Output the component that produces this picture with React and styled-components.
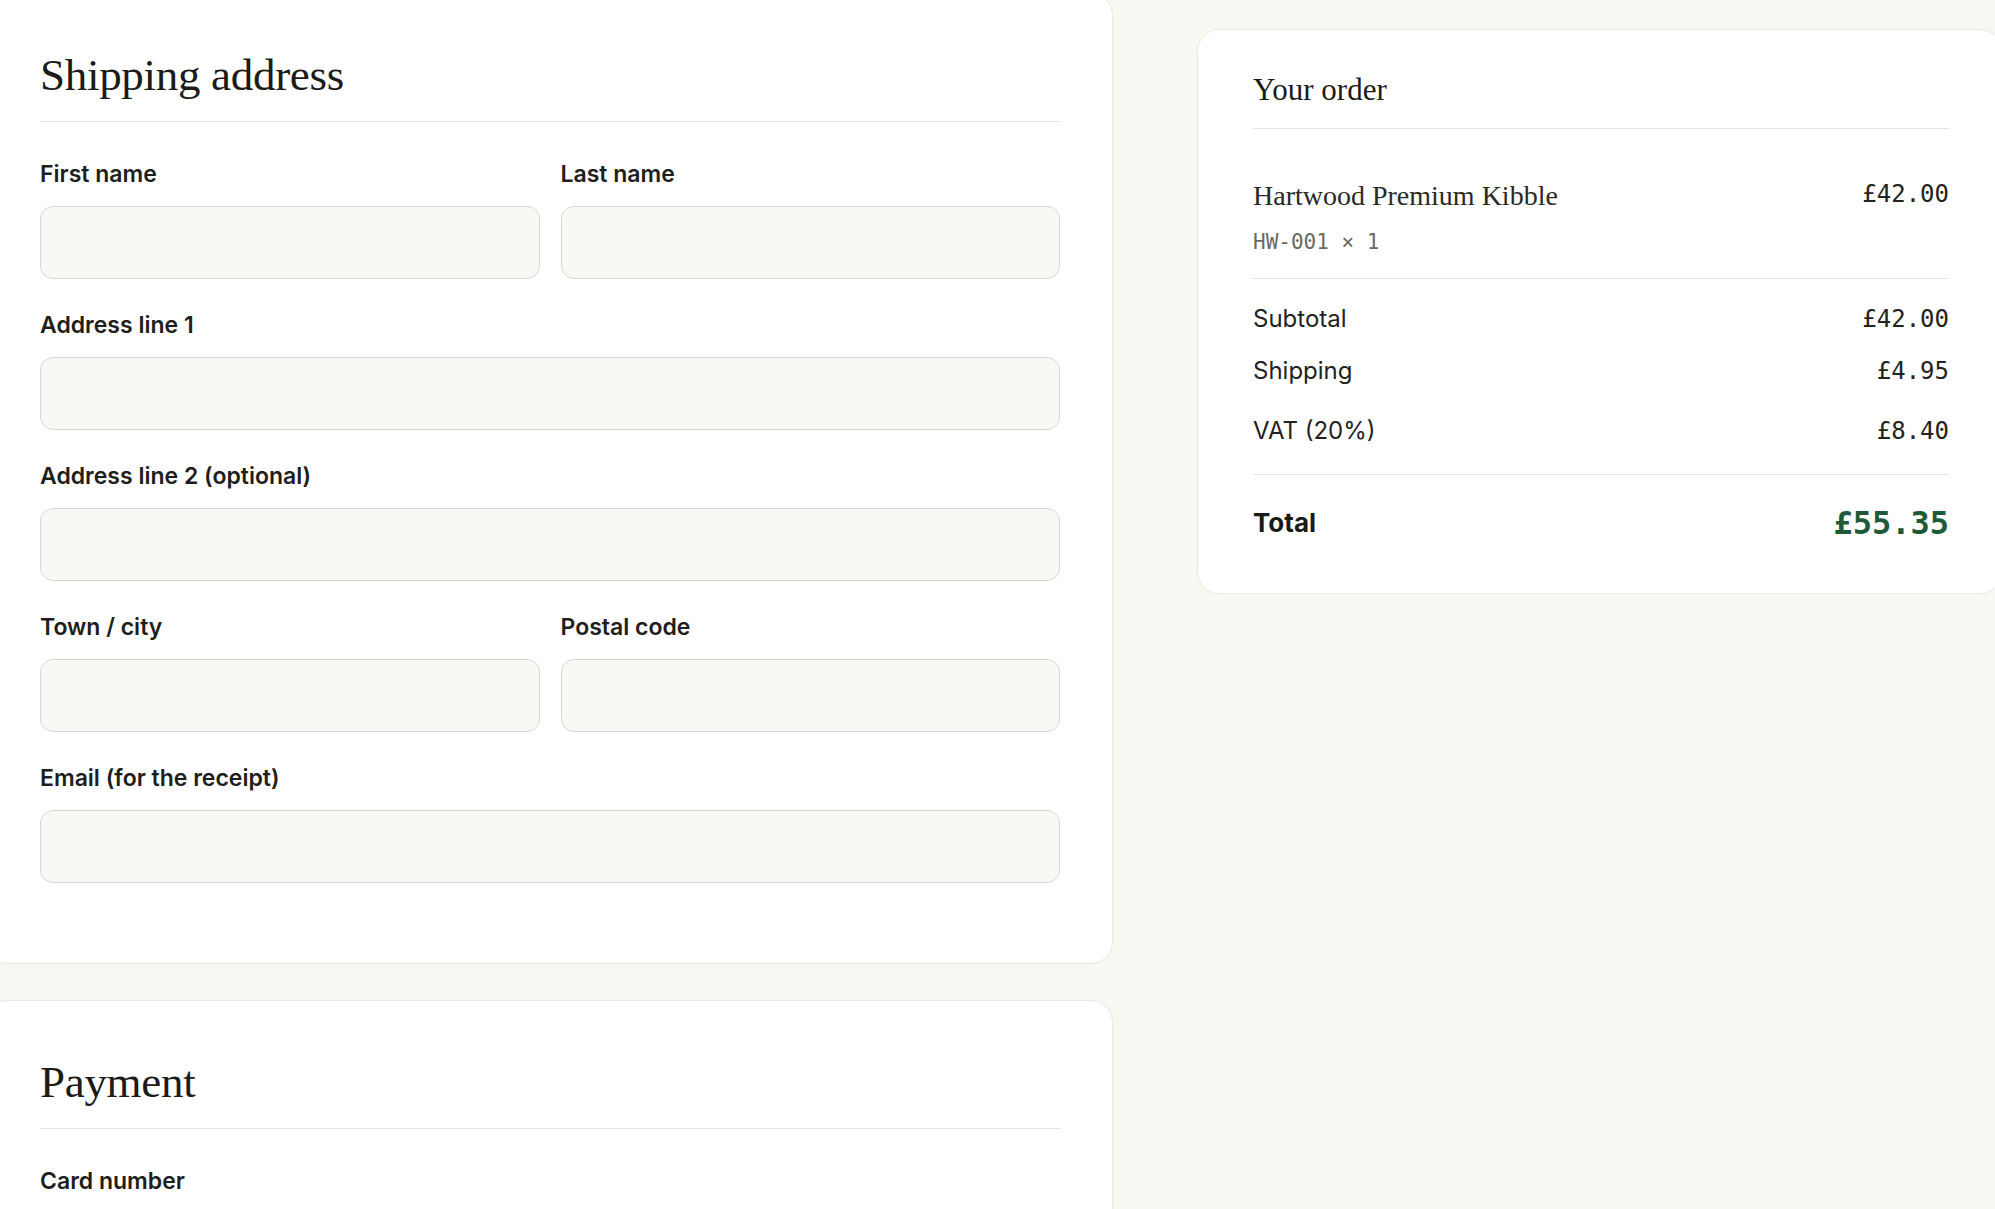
import React from 'react';
import styled, { createGlobalStyle } from 'styled-components';

const GlobalStyle = createGlobalStyle`
  html, body {
    margin: 0;
    padding: 0;
    background: #f8f8f3;
    overflow: hidden;
  }
  body {
    font-family: Inter, "Noto Sans", sans-serif;
    color: #1d1d1b;
  }
`;

const Page = styled.div`
  display: grid;
  grid-template-columns: 1128px 805px;
  column-gap: 84px;
  align-items: start;
  margin: -7px 0 0 -15px;
`;

const Column = styled.div`
  display: flex;
  flex-direction: column;
  gap: 36px;
`;

const Card = styled.section`
  background: #ffffff;
  border: 1px solid #e9e9e3;
  border-radius: 22px;
  padding: ${(p) => p.$pad || '54px 52px 80px 54px'};
  box-sizing: border-box;
  margin-top: ${(p) => p.$offset || 0};
`;

const Heading = styled.h2`
  margin: 0;
  font-family: "Liberation Serif", "DejaVu Serif", serif;
  font-weight: 400;
  font-size: 45px;
  line-height: 54px;
  letter-spacing: -0.3px;
  color: #1c1b19;
  padding-bottom: 19px;
  border-bottom: 1px solid #e6e6e0;
`;

const Fields = styled.div`
  display: grid;
  grid-template-columns: 1fr 1fr;
  column-gap: 21px;
  row-gap: 32px;
  margin-top: 38px;
`;

const Field = styled.label`
  display: flex;
  flex-direction: column;
  gap: 18px;
  grid-column: ${(p) => (p.$wide ? '1 / -1' : 'auto')};
`;

const LabelText = styled.span`
  font-family: Inter, "Noto Sans", sans-serif;
  font-weight: 600;
  font-size: 23px;
  line-height: 28px;
  color: #1e1e1c;
`;

const Input = styled.input`
  height: 73px;
  box-sizing: border-box;
  background: #f8f8f4;
  border: 1.5px solid #d8d8d2;
  border-radius: 13px;
  padding: 0 20px;
  font-family: Inter, sans-serif;
  font-size: 21px;
  outline: none;
`;

const OrderTitle = styled.h3`
  margin: 0;
  font-family: "Liberation Serif", "DejaVu Serif", serif;
  font-weight: 400;
  font-size: 31px;
  line-height: 44px;
  color: #1c1b19;
  padding-bottom: 16px;
  border-bottom: 1px solid #e6e6e0;
`;

const Item = styled.div`
  display: flex;
  justify-content: space-between;
  align-items: flex-start;
  padding: 49px 0 22px;
  border-bottom: 1px solid #e6e6e0;
`;

const ItemInfo = styled.div`
  display: flex;
  flex-direction: column;
  gap: 14px;
`;

const ItemName = styled.div`
  font-family: "Liberation Serif", "DejaVu Serif", serif;
  font-size: 28px;
  line-height: 36px;
  color: #2a2926;
`;

const Sku = styled.div`
  font-family: "DejaVu Sans Mono", "Liberation Mono", monospace;
  font-size: 21px;
  line-height: 28px;
  color: #6a6964;
`;

const Money = styled.span`
  font-family: "DejaVu Sans Mono", "Liberation Mono", monospace;
  font-size: ${(p) => (p.$big ? '32px' : '24px')};
  font-weight: ${(p) => (p.$big ? 700 : 400)};
  line-height: ${(p) => (p.$big ? '40px' : '32px')};
  color: ${(p) => (p.$big ? '#1e5a3a' : '#232320')};
`;

const Totals = styled.div`
  display: flex;
  flex-direction: column;
  padding: 24px 0 27px;
  border-bottom: 1px solid #e6e6e0;
`;

const Row = styled.div`
  display: flex;
  justify-content: space-between;
  align-items: center;
  margin-top: ${(p) => p.$gap || 0};
`;

const RowLabel = styled.span`
  font-family: Inter, "Noto Sans", sans-serif;
  font-size: 24px;
  line-height: 32px;
  color: #222220;
`;

const TotalRow = styled.div`
  display: flex;
  justify-content: space-between;
  align-items: center;
  padding-top: 28px;
`;

const TotalLabel = styled.span`
  font-family: Inter, "Noto Sans", sans-serif;
  font-weight: 700;
  font-size: 26px;
  line-height: 36px;
  color: #1a1a18;
`;

const shippingFields = [
  { label: 'First name' },
  { label: 'Last name' },
  { label: 'Address line 1', wide: true },
  { label: 'Address line 2 (optional)', wide: true },
  { label: 'Town / city' },
  { label: 'Postal code' },
  { label: 'Email (for the receipt)', wide: true },
];

const summary = [
  { label: 'Subtotal', value: '£42.00' },
  { label: 'Shipping', value: '£4.95', gap: '20px' },
  { label: 'VAT (20%)', value: '£8.40', gap: '28px' },
];

export default function App() {
  return (
    <>
      <GlobalStyle />
      <Page>
        <Column>
          <Card>
            <Heading>Shipping address</Heading>
            <Fields>
              {shippingFields.map((f) => (
                <Field key={f.label} $wide={f.wide}>
                  <LabelText>{f.label}</LabelText>
                  <Input type="text" />
                </Field>
              ))}
            </Fields>
          </Card>
          <Card>
            <Heading>Payment</Heading>
            <Fields>
              <Field $wide>
                <LabelText>Card number</LabelText>
                <Input type="text" />
              </Field>
            </Fields>
          </Card>
        </Column>

        <Card $pad="38px 52px 50px 55px" $offset="36px">
          <OrderTitle>Your order</OrderTitle>
          <Item>
            <ItemInfo>
              <ItemName>Hartwood Premium Kibble</ItemName>
              <Sku>HW-001 × 1</Sku>
            </ItemInfo>
            <Money>£42.00</Money>
          </Item>
          <Totals>
            {summary.map((s) => (
              <Row key={s.label} $gap={s.gap}>
                <RowLabel>{s.label}</RowLabel>
                <Money>{s.value}</Money>
              </Row>
            ))}
          </Totals>
          <TotalRow>
            <TotalLabel>Total</TotalLabel>
            <Money $big>£55.35</Money>
          </TotalRow>
        </Card>
      </Page>
    </>
  );
}
